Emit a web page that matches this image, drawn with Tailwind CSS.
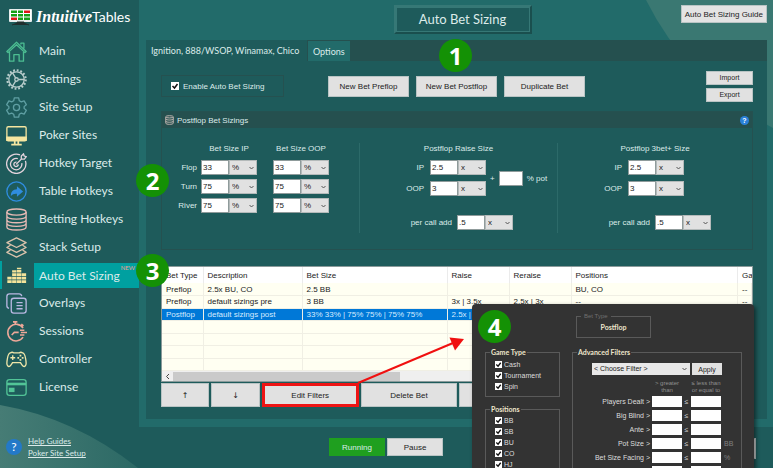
<!DOCTYPE html>
<html lang="en">
<head>
    <meta charset="UTF-8">
    <meta name="viewport" content="width=device-width, initial-scale=1.0">
    <title>IntuitiveTables - Auto Bet Sizing</title>
    <script src="https://cdn.jsdelivr.net/npm/@tailwindcss/browser@4"></script>
</head>
<body class="relative flex flex-col h-screen overflow-hidden bg-[#1e5b5b] font-['Liberation_Sans',sans-serif] text-[8px] leading-[11px] text-[#dcebea]">

    <!-- Background curve, bottom left -->
    <svg class="absolute left-0 bottom-0 w-[140px] h-16" viewBox="0 0 140 64" aria-hidden="true">
        <defs><linearGradient id="curva" x1="0" x2="1"><stop offset="0" stop-color="#467c75"/><stop offset="1" stop-color="#2c6965"/></linearGradient></defs>
        <path d="M0 1Q75 14 138 64H0Z" fill="url(#curva)"/>
    </svg>

    <div class="relative flex h-[427px] shrink-0">

        <!-- Sidebar -->
        <aside class="flex flex-col w-[139px] shrink-0 font-[Lato,sans-serif]">
            <div class="flex items-center h-[37px] pl-[9px] pb-1 gap-1 text-white">
                <svg class="w-[23px] h-[18px]" viewBox="0 0 23 18">
                    <rect x="0" y="1" width="23" height="13" rx="1" fill="#e8eeee"/>
                    <rect x="1" y="2" width="21" height="10" fill="#fff"/>
                    <path d="M2 2.500h6v2.500H2zM9 2.500h5v2.500H9zM2 6h6v2.500H2zM9 6h5v2.500H9zM15 6h6v2.500h-6zM9 9.500h5v2.500H9zM15 9.500h6v2.500h-6z" fill="#16a016"/>
                    <path d="M15 2.500h6v2.500h-6zM2 9.500h6v2.500H2z" fill="#e01616"/>
                    <path d="M3 17l4-1.500h9l4 1.500M8 14h7v1.500H8z" stroke="#20302f" fill="#20302f"/>
                </svg>
                <p class="text-sm"><i class="font-['Liberation_Serif',serif] text-base font-bold">Intuitive</i>Tables</p>
            </div>

            <nav class="flex flex-col text-xs leading-4">
                <a href="#" class="flex items-center h-7 pl-[6px]">
                    <svg class="w-[21px] h-[21px] mr-[7px]" viewBox="0 0 24 24" fill="none" stroke="#4cbd92" stroke-width="1.500" stroke-linejoin="round"><path d="M1 12 12 1.500 23 12l-1.300 1.300L12 4.200 2.300 13.300ZM17 4V2.500h3.500v6M4 12.500V23h5v-7.500h6V23h5V12.500"/></svg>
                    <span class="pl-[5px]">Main</span>
                </a>
                <a href="#" class="flex items-center h-7 pl-[6px]">
                    <svg class="w-[21px] h-[21px] mr-[7px]" viewBox="0 0 24 24" fill="none" stroke="#b9cdcc" stroke-width="1.500"><circle cx="12" cy="12" r="10.500" stroke-width="2.500" stroke-dasharray="2.100 2.020"/><circle cx="12" cy="12" r="8.800"/><circle cx="12" cy="12" r="2"/><path d="M14 12h7M11 10.200 7.500 4.500M11 13.800l-3.500 5.700"/></svg>
                    <span class="pl-[5px]">Settings</span>
                </a>
                <a href="#" class="flex items-center h-7 pl-[6px]">
                    <svg class="w-[21px] h-[21px] mr-[7px]" viewBox="0 0 24 24" fill="none" stroke="#5f9fa3" stroke-width="1.500" stroke-linejoin="round"><path d="M9.500 1h5l.7 3.300 2.300 1.300 3.200-1.100 2.500 4.300L20.700 11v2l2.500 2.200-2.500 4.300-3.200-1.100-2.300 1.300-.7 3.300h-5l-.7-3.300-2.300-1.300-3.200 1.100-2.500-4.300L3.300 13v-2L.8 8.800l2.500-4.300 3.200 1.100 2.300-1.300Z"/><circle cx="12" cy="12" r="3.500"/></svg>
                    <span class="pl-[5px]">Site Setup</span>
                </a>
                <a href="#" class="flex items-center h-7 pl-[6px]">
                    <svg class="w-[21px] h-[21px] mr-[7px]" viewBox="0 0 24 24" fill="none" stroke="#f5e6a0" stroke-width="1.500"><rect x="1" y="2" width="22" height="16" rx="1.500"/><path d="M1 14h22v3.500H1z" fill="#f5e6a0"/><path d="M10 18v4M14 18v4M6 22.500h12" stroke-width="2"/></svg>
                    <span class="pl-[5px]">Poker Sites</span>
                </a>
                <a href="#" class="flex items-center h-7 pl-[6px]">
                    <svg class="w-[21px] h-[21px] mr-[7px]" viewBox="0 0 24 24" fill="none" stroke="#e3d3dc" stroke-width="1.500"><path d="M16 2.200A11 11 0 1 0 22.200 9M13.500 6.500A6.500 6.500 0 1 0 18 11.500M12 10.500A2.500 2.500 0 1 0 14 13M11.500 13l7-7M17.500 6.500V3.500L20 1l.8 2.500 2.400.7L21 7h-3"/></svg>
                    <span class="pl-[5px]">Hotkey Target</span>
                </a>
                <a href="#" class="flex items-center h-7 pl-[6px]">
                    <svg class="w-[21px] h-[21px] mr-[7px]" viewBox="0 0 24 24" fill="none" stroke="#2f8de0" stroke-width="1.500"><circle cx="12" cy="12" r="11"/><path d="M5.500 17q0-7.500 7-7.500V6l7 6-7 6v-3.500q-4.500-.5-7 2.500Z" fill="#2f8de0" stroke="none"/></svg>
                    <span class="pl-[5px]">Table Hotkeys</span>
                </a>
                <a href="#" class="flex items-center h-7 pl-[6px]">
                    <svg class="w-[21px] h-[23px] mr-[7px]" viewBox="0 0 24 26" fill="none" stroke="#e6b9b4" stroke-width="1.500"><ellipse cx="12" cy="4.500" rx="11" ry="3.500"/><path d="M1 4.500v17c0 4.700 22 4.700 22 0v-17M1 9c0 4.700 22 4.700 22 0M1 13.200c0 4.700 22 4.700 22 0M1 17.400c0 4.700 22 4.700 22 0"/></svg>
                    <span class="pl-[5px]">Betting Hotkeys</span>
                </a>
                <a href="#" class="flex items-center h-7 pl-[6px]">
                    <svg class="w-[21px] h-[21px] mr-[7px]" viewBox="0 0 24 24" fill="none" stroke="#dcc3ac" stroke-width="1.500" stroke-linejoin="round"><path d="M12 1 23 6.500 12 12 1 6.500ZM5 9.500 1 12l11 5.500L23 12l-4-2.500M5 15l-4 2.500L12 23l11-5.500L19 15"/></svg>
                    <span class="pl-[5px]">Stack Setup</span>
                </a>
                <a href="#" class="relative flex items-center h-7 border-l-2 border-[#00a0a0] pl-1" aria-current="page">
                    <svg class="w-[21px] h-[21px] mr-[7px]" viewBox="0 0 24 24" fill="none" stroke="#f3e39a" stroke-width="5" stroke-dasharray="3.200 .8"><path d="M4 20.500v-7M9.500 20.500V6M15 20.500V3M20.500 20.500v-11"/></svg>
                    <span class="flex-1 bg-[#00a0a0] h-[25px] pl-[5px] leading-[25px]">Auto Bet Sizing</span>
                    <sup class="absolute right-1 top-1 text-[6px] leading-none text-[#ee9d92]">NEW</sup>
                </a>
                <a href="#" class="flex items-center h-7 pl-[6px]">
                    <svg class="w-[21px] h-[21px] mr-[7px]" viewBox="0 0 24 24" fill="none" stroke="#b9b8e2" stroke-width="1.500"><path d="M3.500 17.500Q1 17 1 14.500V4q0-3 3-3h11q2.500 0 3 2.500"/><rect x="6" y="6" width="17" height="17" rx="3"/><path d="M12 11h7M12 14.500h7M12 18h7"/></svg>
                    <span class="pl-[5px]">Overlays</span>
                </a>
                <a href="#" class="flex items-center h-7 pl-[6px]">
                    <svg class="w-[21px] h-[21px] mr-[7px]" viewBox="0 0 24 24" fill="none" stroke="#eda899" stroke-width="1.800"><path d="M19.500 8a9.500 9.500 0 1 0 0 10.500M8 1h5M10.500 1v3.500M17.500 3.500l2.500 2M6.500 16l3-3h5M16 10.500h5M17 13.200h7M16 16h5"/></svg>
                    <span class="pl-[5px]">Sessions</span>
                </a>
                <a href="#" class="flex items-center h-7 pl-[6px]">
                    <svg class="w-[21px] h-[21px] mr-[7px]" viewBox="0 0 24 24" fill="none" stroke="#efe6a9" stroke-width="1.500"><path d="M5 4.500q2-1.500 4 0h6q2-1.500 4 0 2.500.5 3.500 7 1.500 8-1.500 8.500-2 0-4.500-4.500h-9Q5 20 3 20q-3-.5-1.500-8.500 1-6.500 3.500-7ZM5 10h5.500M7.700 7.200v5.500"/><path d="M16.500 6.500v2M16.500 11.500v2M13 10h2M18 10h2" stroke-width="2"/></svg>
                    <span class="pl-[5px]">Controller</span>
                </a>
                <a href="#" class="flex items-center h-7 pl-[6px]">
                    <svg class="w-[21px] h-[21px] mr-[7px]" viewBox="0 0 24 24" fill="none" stroke="#52c497" stroke-width="1.500"><rect x="1" y="3" width="22" height="18" rx="3"/><path d="M1 8h22" stroke-width="3"/><rect x="4" y="13" width="5" height="3.500" fill="#52c497"/></svg>
                    <span class="pl-[5px]">License</span>
                </a>
            </nav>
        </aside>

        <!-- Main area -->
        <main class="relative flex flex-col flex-1 min-w-0 bg-[#226b6a] pl-[7px] pr-[6px] pb-2">
            <svg class="absolute right-0 top-0 w-[127px] h-[128px]" viewBox="0 0 127 128" aria-hidden="true">
                <path d="M0 0Q42 84 127 128V0Z" fill="#3a7872"/>
            </svg>

            <header class="relative grid grid-cols-[1fr_auto_1fr] items-start h-10 shrink-0 pl-3 pt-[5px]">
                <div></div>
                <h1 class="border-2 border-[#367876] border-b-[#1a4f4e] border-r-[#1a4f4e] bg-[#1e5b5b] ring-1 ring-inset ring-[#367876] w-[138px] h-[29px] text-center font-[Lato,sans-serif] text-[13px] leading-6">Auto Bet Sizing</h1>
                <button class="justify-self-end h-[18px] px-[3px] border border-[#b9c4c4] bg-[#e3e3e3] text-[#222]">Auto Bet Sizing Guide</button>
            </header>

            <section class="relative flex flex-col flex-1 bg-[#1e5b5b]">
                <div class="flex h-[21px] shrink-0 bg-[#25504f] font-[Lato,sans-serif] text-[9px]">
                    <button class="w-[161px] pl-[5px] text-left whitespace-nowrap bg-[#1e5b5b]">Ignition, 888/WSOP, Winamax, Chico</button>
                    <button class="mt-px ml-px px-[5px] bg-[#226b6a]">Options</button>
                </div>

                <div class="flex flex-col flex-1 pl-[15px] pr-[14px]">
                    <!-- Actions -->
                    <div class="flex items-center h-[50px] shrink-0">
                        <label class="flex items-center w-[123px] h-[22px] pl-[9px] gap-1 border border-[#255150] whitespace-nowrap">
                            <input type="checkbox" checked class="appearance-none size-2 bg-white">
                            <svg class="absolute size-2" viewBox="0 0 8 8" fill="none" stroke="#111" stroke-width="1.500"><path d="m1.500 4 2 2 3-4"/></svg>
                            Enable Auto Bet Sizing
                        </label>
                        <div class="flex gap-[7px] ml-11">
                            <button class="w-[81px] h-[21px] border border-[#b9c4c4] bg-[#e1e1e1] text-[#222]">New Bet Preflop</button>
                            <button class="w-[81px] h-[21px] border border-[#b9c4c4] bg-[#e1e1e1] text-[#222]">New Bet Postflop</button>
                            <button class="w-[81px] h-[21px] border border-[#b9c4c4] bg-[#e1e1e1] text-[#222]">Duplicate Bet</button>
                        </div>
                        <div class="flex flex-col gap-[3px] ml-auto text-[7px]">
                            <button class="w-[47px] h-[14px] border border-[#b9c4c4] bg-[#e1e1e1] text-[#222]">Import</button>
                            <button class="w-[47px] h-[14px] border border-[#b9c4c4] bg-[#e1e1e1] text-[#222]">Export</button>
                        </div>
                    </div>

                    <!-- Postflop sizings -->
                    <section class="h-[139px] shrink-0 border border-[#255150]">
                        <div class="flex items-center h-4 px-[3px] bg-[#25504f]">
                            <svg class="w-[9px] h-[10px] mr-[3px]" viewBox="0 0 24 26" fill="none" stroke="#c5b9b4" stroke-width="2.500"><ellipse cx="12" cy="4.500" rx="10" ry="3"/><path d="M2 4.500v17c0 4 20 4 20 0v-17M2 10c0 4 20 4 20 0M2 16c0 4 20 4 20 0"/></svg>
                            <h2>Postflop Bet Sizings</h2>
                            <button class="ml-auto size-[9px] rounded-full bg-[#2a80d8] text-[7px] leading-[9px] font-bold text-white">?</button>
                        </div>
                        <div class="grid grid-cols-[197fr_198fr_195fr] pt-[15px] whitespace-nowrap">
                            <div class="h-[90px]">
                                <div class="flex mb-[6px] pl-[39px] gap-4 text-center">
                                    <span class="w-14">Bet Size IP</span>
                                    <span class="w-14">Bet Size OOP</span>
                                </div>
                                <div id="calles" class="flex flex-col gap-1"></div>
                            </div>
                            <div class="h-[90px] border-l border-[#2c6a69]">
                                <h3 class="text-center mb-[6px]">Postflop Raise Size</h3>
                                <div class="flex items-center">
                                    <div class="flex flex-col gap-[6px]" data-tamanos="raise"></div>
                                    <label class="flex items-center gap-1 pl-1">+ <input type="text" class="w-6 h-[15px] bg-white border border-[#8f9b9b] text-black"> % pot</label>
                                </div>
                                <div class="mt-[19px]" data-extra="raise"></div>
                            </div>
                            <div class="h-[90px] border-l border-[#2c6a69]">
                                <h3 class="text-center mb-[6px]">Postflop 3bet+ Size</h3>
                                <div class="flex flex-col gap-[6px]" data-tamanos="3bet"></div>
                                <div class="mt-[19px]" data-extra="3bet"></div>
                            </div>
                        </div>
                    </section>

                    <!-- Bets table -->
                    <div class="mt-4 h-[116px] shrink-0 overflow-hidden flex flex-col bg-[#fffff2] border border-[#8a9a9a] text-[#222]">
                        <table class="w-full h-[104px] table-fixed border-collapse whitespace-nowrap text-left">
                            <thead>
                                <tr class="h-4 bg-white">
                                    <th class="w-[41px] pl-1 font-normal border-r border-[#ebebeb]">Bet Type</th>
                                    <th class="w-[99px] pl-1 font-normal border-r border-[#ebebeb]">Description</th>
                                    <th class="w-[145px] pl-1 font-normal border-r border-[#ebebeb]">Bet Size</th>
                                    <th class="w-[62px] pl-1 font-normal border-r border-[#ebebeb]">Raise</th>
                                    <th class="w-[62px] pl-1 font-normal border-r border-[#ebebeb]">Reraise</th>
                                    <th class="pl-1 font-normal border-r border-[#ebebeb]">Positions</th>
                                    <th class="w-[14px] pl-1 font-normal">Ga</th>
                                </tr>
                            </thead>
                            <tbody id="apuestas"></tbody>
                        </table>
                        <div class="flex items-center h-[10px] bg-[#efefef]">
                            <svg class="w-[11px] h-[7px]" viewBox="0 0 11 7" fill="none" stroke="#444"><path d="M7 1 4.500 3.500 7 6"/></svg>
                            <div class="w-[227px] h-[9px] bg-[#cacaca]"></div>
                        </div>
                    </div>

                    <div class="relative grid grid-cols-[1fr_1fr_2fr_2fr_2fr_2fr] gap-[2px] h-6 mt-px mr-[98px]">
                        <button aria-label="Move up" class="bg-[#e1e1e1] border border-[#b9c4c4] text-[#222] font-['DejaVu_Sans',sans-serif]">↑</button>
                        <button aria-label="Move down" class="bg-[#e1e1e1] border border-[#b9c4c4] text-[#222] font-['DejaVu_Sans',sans-serif]">↓</button>
                        <button class="bg-[#e1e1e1] border-[3px] border-[#ee1414] text-[#222]">Edit Filters</button>
                        <button class="bg-[#e1e1e1] border border-[#b9c4c4] text-[#222]">Delete Bet</button>
                        <button class="bg-[#e1e1e1] border border-[#b9c4c4]" aria-label="More"></button>
                    </div>
                </div>
            </section>
        </main>
    </div>

    <!-- Footer -->
    <footer class="relative flex items-start gap-[2px] flex-1 pt-2 pl-[6px] pr-[17px]">
        <div class="flex items-center gap-[6px] w-[321px] font-[Lato,sans-serif] text-[8px] leading-3">
            <span class="size-4 rounded-full bg-[#2379c8] text-center text-xs leading-4 text-white">?</span>
            <div class="flex flex-col underline">
                <a href="#">Help Guides</a>
                <a href="#">Poker Site Setup</a>
            </div>
        </div>
        <button class="w-14 h-[18px] mt-[3px] bg-[#1f9f1f]">Running</button>
        <button class="w-14 h-[18px] mt-[3px] border border-[#b9c4c4] bg-[#e1e1e1] text-[#222]">Pause</button>
        <button class="ml-auto w-14 h-[21px] mt-[3px] border border-[#b9c4c4] bg-[#e1e1e1]" aria-label="Close"></button>
    </footer>

    <!-- Arrow from Edit Filters to the filters window -->
    <svg class="absolute left-[355px] top-[334px] w-[112px] h-[52px]" viewBox="0 0 112 52" aria-hidden="true">
        <path d="M3 49 98 9" stroke="#f01010" stroke-width="2"/>
        <path d="M109 5 94.500 3.500 100 16.500Z" fill="#f01010"/>
    </svg>

    <!-- Filters window -->
    <div class="absolute left-[472px] top-[304px] bottom-0 w-[282px] overflow-hidden rounded-t bg-[#333] shadow-[2px_2px_4px_#00000080] text-[7px] text-[#ddd] flex flex-col pl-[13px] pr-3 pt-2">
        <fieldset class="w-[75px] h-[26px] shrink-0 ml-[91px] border border-[#5a5a5a] px-1 text-center">
            <legend class="px-[3px] text-[6px] leading-[9px] text-left text-[#707070]">Bet Type</legend>
            <p class="font-[Lato,sans-serif] font-bold text-[#eee6cc] leading-3">Postflop</p>
        </fieldset>
        <div class="flex justify-between items-start mt-[9px] shrink-0">
            <div class="flex flex-col gap-[7px] w-[75px]">
                <fieldset class="border border-[#5a5a5a] h-[50px] px-1">
                    <legend class="px-px font-[Lato,sans-serif] font-bold text-[#eee6cc]">Game Type</legend>
                    <div id="juegos" class="pl-[5px] pt-px"></div>
                </fieldset>
                <fieldset class="border border-b-0 border-[#5a5a5a] h-16 px-1">
                    <legend class="px-px font-[Lato,sans-serif] font-bold text-[#eee6cc]">Positions</legend>
                    <div id="posiciones" class="pl-[5px]"></div>
                </fieldset>
            </div>
            <fieldset class="w-[170px] h-[121px] overflow-hidden border border-b-0 border-[#5a5a5a] pl-1">
                <legend class="px-px font-[Lato,sans-serif] font-bold text-[#eee6cc]">Advanced Filters</legend>
                <div class="flex gap-[2px] pl-[15px] pt-[5px]">
                    <div class="relative">
                        <select aria-label="Filter" class="appearance-none block w-[98px] h-3 px-[2px] bg-[#e8e8e8] text-[#222] leading-3"><option>&lt; Choose Filter &gt;</option></select>
                        <svg class="absolute right-[3px] top-1 w-[5px] h-1" viewBox="0 0 5 4" fill="none" stroke="#555"><path d="m.5 1 2 2 2-2"/></svg>
                    </div>
                    <button class="w-[30px] h-3 bg-[#e1e1e1] text-[#222]">Apply</button>
                </div>
                <div class="flex gap-[5px] pl-[73px] pt-[5px] pb-[2px] text-center text-[6px] leading-[7px] text-[#909090]">
                    <span class="w-[34px]">&gt; greater<br>than</span>
                    <span class="w-[34px]">≤ less than<br>or equal to</span>
                </div>
                <div id="filtros" class="flex flex-col gap-[3px]"></div>
            </fieldset>
        </div>
    </div>

    <!-- Step markers -->
    <span class="absolute left-[439px] top-[39px] size-[33px] rounded-full bg-[#149105] text-center font-['Open_Sans',sans-serif] font-bold text-2xl leading-[33px] text-white">1</span>
    <span class="absolute left-[136px] top-[164px] size-[33px] rounded-full bg-[#149105] text-center font-['Open_Sans',sans-serif] font-bold text-2xl leading-[33px] text-white">2</span>
    <span class="absolute left-[136px] top-[254px] size-[33px] rounded-full bg-[#149105] text-center font-['Open_Sans',sans-serif] font-bold text-2xl leading-[33px] text-white">3</span>
    <span class="absolute left-[478px] top-[310px] size-[33px] rounded-full bg-[#149105] text-center font-['Open_Sans',sans-serif] font-bold text-2xl leading-[33px] text-white">4</span>

    <script>
        // Value box plus unit drop-down
        function campo(id, nombre, valor, unidad) {
            return `
                <div class="flex text-[#222]">
                    <input id="${id}" aria-label="${nombre}" type="text" value="${valor}" class="w-7 h-[15px] px-px bg-white border border-[#8f9b9b]">
                    <div class="relative">
                        <select aria-label="${nombre} unit" class="appearance-none block w-7 h-[15px] px-[2px] leading-[13px] bg-[#e1e1e1] border border-[#b4baba]"><option>${unidad}</option></select>
                        <svg class="absolute right-[3px] top-[6px] w-[5px] h-1" viewBox="0 0 5 4" fill="none" stroke="#555"><path d="m.5 1 2 2 2-2"/></svg>
                    </div>
                </div>`;
        }

        // Flop, turn and river
        const calles = [['Flop', '33'], ['Turn', '75'], ['River', '75']];
        document.getElementById('calles').innerHTML = calles.map(([calle, valor]) => `
            <div class="flex items-center">
                <label for="${calle}-ip" class="w-[35px] mr-1 text-right">${calle}</label>
                ${campo(calle + '-ip', calle + ' IP', valor, '%')}
                <div class="w-4"></div>
                ${campo(calle + '-oop', calle + ' OOP', valor, '%')}
            </div>`).join('');

        // Raise and 3bet+
        document.querySelectorAll('[data-tamanos]').forEach((caja) => {
            const tipo = caja.dataset.tamanos;
            caja.innerHTML = [['IP', '2.5'], ['OOP', '3']].map(([pos, valor]) => `
                <div class="flex items-center">
                    <label for="${tipo}-${pos}" class="w-[64px] mr-[6px] text-right">${pos}</label>
                    ${campo(tipo + '-' + pos, tipo + ' ' + pos, valor, 'x')}
                </div>`).join('');
        });
        document.querySelectorAll('[data-extra]').forEach((caja) => {
            const tipo = caja.dataset.extra;
            caja.innerHTML = `
                <div class="flex items-center">
                    <label for="${tipo}-call" class="w-[92px] mr-[5px] text-right">per call add</label>
                    ${campo(tipo + '-call', tipo + ' per call', '.5', 'x')}
                </div>`;
        });

        // Table rows, the empty ones keep the grid visible
        const apuestas = [
            ['Preflop', '2.5x BU, CO', '2.5 BB', '', '', 'BU, CO', '--'],
            ['Preflop', 'default sizings pre', '3 BB', '3x | 3.5x', '2.5x | 3x', '--', '--'],
            ['Postflop', 'default sizings post', '33% 33% | 75% 75% | 75% 75%', '2.5x |', '', '', ''],
            ['', '', '', '', '', '', ''],
            ['', '', '', '', '', '', ''],
            ['', '', '', '', '', '', ''],
            ['', '', '', '', '', '', '']
        ];
        document.getElementById('apuestas').innerHTML = apuestas.map((fila, i) => `
            <tr class="h-3 ${i === 2 ? 'bg-[#0078d7] text-[#d5ebff]' : ''}">
                ${fila.map((celda) => `<td class="p-0 pl-1 leading-[11px] border-r border-b border-[#f0efe4]">${celda}</td>`).join('')}
            </tr>`).join('');

        // Tick boxes of the filters window
        function casillas(id, nombres) {
            document.getElementById(id).innerHTML = nombres.map((nombre) => `
                <label class="relative flex items-center gap-[2px] h-[11px] whitespace-nowrap">
                    <input type="checkbox" checked class="appearance-none size-[7px] bg-white">
                    <svg class="absolute left-0 size-[7px]" viewBox="0 0 8 8" fill="none" stroke="#111" stroke-width="1.500"><path d="m1.500 4 2 2 3-4"/></svg>
                    ${nombre}
                </label>`).join('');
        }
        casillas('juegos', ['Cash', 'Tournament', 'Spin']);
        casillas('posiciones', ['BB', 'SB', 'BU', 'CO', 'HJ']);

        const filtros = [['Players Dealt', ''], ['Big Blind', ''], ['Ante', ''], ['Pot Size', 'BB'], ['Bet Size Facing', '%']];
        document.getElementById('filtros').innerHTML = filtros.map(([nombre, unidad]) => `
            <div class="flex items-center h-[11px]">
                <span class="w-[73px] mr-[2px] text-right">${nombre} &gt;</span>
                <input type="text" aria-label="${nombre} greater than" class="w-[30px] h-[11px] bg-white">
                <span class="w-[9px] text-center">≤</span>
                <input type="text" aria-label="${nombre} at most" class="w-[30px] h-[11px] bg-white">
                <span class="pl-[3px] text-[#808080]">${unidad}</span>
            </div>`).join('') + `
            <div class="flex gap-[9px] pl-[75px]">
                <input type="text" aria-label="Next filter greater than" class="w-[30px] h-[11px] bg-white">
                <input type="text" aria-label="Next filter at most" class="w-[30px] h-[11px] bg-white">
            </div>`;
    </script>

</body>
</html>
